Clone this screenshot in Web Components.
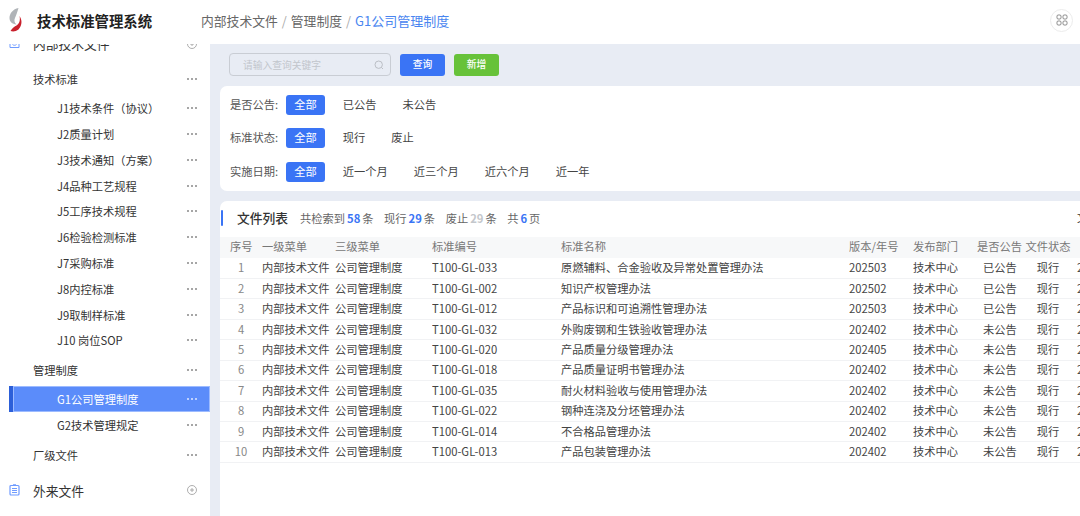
<!DOCTYPE html>
<html lang="zh">
<head>
<meta charset="utf-8">
<title>技术标准管理系统</title>
<style>
    html, body { margin: 0; height: 100%; overflow: hidden; }
    body { font-family: "Noto Sans CJK SC", "Noto Sans", sans-serif; color: #333; background: #fff; }
</style>
</head>
<body>
<app-shell>
    <app-header slot="header"></app-header>
    <side-nav slot="side"></side-nav>
    <search-bar slot="main"></search-bar>
    <filter-panel slot="main"></filter-panel>
    <file-table slot="main"></file-table>
</app-shell>

<script>
// ### Page frame ###
class AppShell extends HTMLElement {
    constructor() {
        super();
        this.attachShadow({ mode: 'open' });
        this.shadowRoot.innerHTML = `
            <style>
                :host { display: flex; flex-direction: column; width: 1080px; height: 516px; overflow: hidden; }
                .body { flex: 1; display: flex; min-height: 0; }
                .side { width: 210px; flex: none; overflow: hidden; }
                .main { flex: 1; min-width: 0; display: flex; flex-direction: column; background: #e8ecf4; padding-left: 10px; overflow: hidden; }
            </style>
            <slot name="header"></slot>
            <div class="body">
                <div class="side"><slot name="side"></slot></div>
                <div class="main"><slot name="main"></slot></div>
            </div>
        `;
    }
}

class AppHeader extends HTMLElement {
    constructor() {
        super();
        this.attachShadow({ mode: 'open' });
        this.shadowRoot.innerHTML = `
            <style>
                :host { display: flex; align-items: center; height: 44px; box-sizing: border-box; padding-bottom: 4px; flex: none; background: #fff; position: relative; z-index: 2; }
                .logo { width: 13px; height: 24px; margin-left: 9px; margin-right: 15px; flex: none; }
                h1 { margin: 0; width: 164px; font-size: 14.4px; font-weight: 700; color: #222; white-space: nowrap; }
                .crumbs { flex: 1; display: flex; gap: 4px; font-size: 12.8px; color: #666; white-space: nowrap; }
                .crumbs i { font-style: normal; color: #aaa; }
                .crumbs b { font-weight: 400; font-size: 13px; color: #4a86f0; }
                .apps { width: 23px; height: 23px; box-sizing: border-box; margin-right: 7px; border: 1px solid #ececec; border-radius: 50%; display: flex; align-items: center; justify-content: center; }
            </style>
            <svg class="logo" viewBox="0 0 13 24">
                <path d="M9.5 0 C4 1 0.5 5.5 0.5 10 C0.5 13.5 3 16 7.5 16.5 C5.2 14.5 5 12 6 10 C7.2 7 8.6 3.5 9.5 0Z" fill="#b0b4b8"/>
                <path d="M10.5 8 C13.5 12 13 18 9.5 21.5 C7 23.5 4 24 1.5 23 C3 20.5 5 18.5 7.5 17.5 C10.5 15.5 11.5 12 10.5 8Z" fill="#c8202c"/>
            </svg>
            <h1>技术标准管理系统</h1>
            <div class="crumbs"><span>内部技术文件</span><i>/</i><span>管理制度</span><i>/</i><b>G1公司管理制度</b></div>
            <div class="apps">
                <svg width="12" height="12" viewBox="0 0 12 12" fill="none" stroke="#888" stroke-width="1">
                    <rect x="1" y="1" width="4" height="4" rx="1.2"/><rect x="7" y="1" width="4" height="4" rx="1.2"/>
                    <rect x="1" y="7" width="4" height="4" rx="1.2"/><rect x="7" y="7" width="4" height="4" rx="1.2"/>
                </svg>
            </div>
        `;
    }
}

// One row of the side menu: level 0 = group with icon, 1 = section, 2 = leaf.
class NavItem extends HTMLElement {
    constructor() {
        super();
        this.attachShadow({ mode: 'open' });
        this.shadowRoot.innerHTML = `
            <style>
                :host { display: flex; align-items: center; height: 25.8px; padding-right: 13px; font-size: 11.25px; color: #333; white-space: nowrap; box-sizing: border-box; }
                :host([level="1"]) { padding-left: 33px; }
                :host([level="2"]) { padding-left: 57px; }
                :host([level="0"]) { padding-left: 33px; font-size: 12.75px; }
                :host([selected]) { background: #5b8cfa; color: #fff; margin-left: 9px; border-left: 4px solid #2c5fd8; padding-left: 44px; box-shadow: inset 0 0 0 1px #9dbbff; }
                .label { flex: 1; }
                .dots { width: 10px; height: 2px; display: flex; justify-content: space-between; }
                .dots span { width: 2px; height: 2px; border-radius: 50%; background: #888; }
                :host([selected]) .dots span { background: #dfe8ff; }
                .plus { display: none; width: 10px; height: 10px; }
                :host([level="0"]) .plus { display: block; }
                :host([level="0"]) .dots { display: none; }
                ::slotted(svg) { position: absolute; left: 9px; }
            </style>
            <slot name="icon"></slot>
            <span class="label"><slot></slot></span>
            <span class="dots"><span></span><span></span><span></span></span>
            <svg class="plus" viewBox="0 0 10 10" fill="none" stroke="#999" stroke-width=".8">
                <circle cx="5" cy="5" r="4.5"/><path d="M3 5h4M5 3v4"/>
            </svg>
        `;
    }
}

class SideNav extends HTMLElement {
    constructor() {
        super();
        this.attachShadow({ mode: 'open' });
        this.shadowRoot.innerHTML = `
            <style>
                :host { display: block; height: 100%; overflow: hidden; background: #fff; }
                /* The menu is scrolled: its first group is cut by the header. */
                .list { position: relative; margin-top: -13.2px; display: flex; flex-direction: column; }
                .sec { margin-top: 3.5px; }
                .first { margin-top: 9.5px; }
                .tail { margin-top: 4px; }
                .group { margin-top: 10px; }
            </style>
            <div class="list">
                <nav-item level="0">
                    <svg slot="icon" width="11" height="11" viewBox="0 0 11 11" fill="none" stroke="#6f9bff" stroke-width="1"><path d="M1 2.5h3l1 1h5v6H1z"/><path d="M3.5 6.5c1 1 3 1 4 0"/></svg>
                    内部技术文件
                </nav-item>
                <nav-item level="1" class="first">技术标准</nav-item>
                <nav-item level="2" class="sec">J1技术条件（协议）</nav-item>
                <nav-item level="2">J2质量计划</nav-item>
                <nav-item level="2">J3技术通知（方案）</nav-item>
                <nav-item level="2">J4品种工艺规程</nav-item>
                <nav-item level="2">J5工序技术规程</nav-item>
                <nav-item level="2">J6检验检测标准</nav-item>
                <nav-item level="2">J7采购标准</nav-item>
                <nav-item level="2">J8内控标准</nav-item>
                <nav-item level="2">J9取制样标准</nav-item>
                <nav-item level="2">J10 岗位SOP</nav-item>
                <nav-item level="1" class="sec">管理制度</nav-item>
                <nav-item level="2" class="sec" selected>G1公司管理制度</nav-item>
                <nav-item level="2">G2技术管理规定</nav-item>
                <nav-item level="1" class="tail">厂级文件</nav-item>
                <nav-item level="0" class="group">
                    <svg slot="icon" width="11" height="12" viewBox="0 0 11 12" fill="none" stroke="#6f9bff" stroke-width="1.2"><rect x="1" y="1.5" width="9" height="9.5" rx="1"/><path d="M3 4.5h5M3 6.5h5M3 8.5h5M4 .8h3"/></svg>
                    外来文件
                </nav-item>
            </div>
        `;
    }
}

class SearchBar extends HTMLElement {
    constructor() {
        super();
        this.attachShadow({ mode: 'open' });
        this.shadowRoot.innerHTML = `
            <style>
                :host { display: flex; align-items: center; height: 42px; flex: none; padding: 0 0 1px 9px; box-sizing: border-box; }
                .input { width: 162px; height: 23px; box-sizing: border-box; border: 1px solid #c9cdd4; border-radius: 4px; display: flex; align-items: center; padding: 0 6px 0 13px; font-size: 9.75px; color: #c2c6cc; margin-right: 9px; }
                .input span { flex: 1; }
                button { width: 45px; height: 22px; border: 0; border-radius: 3px; font: inherit; font-size: 9.75px; font-weight: 500; color: #fff; padding: 0 0 1px; background: #3a74f5; }
                button.add { background: #67c23a; margin-left: 9px; }
            </style>
            <div class="input">
                <span>请输入查询关键字</span>
                <svg width="10" height="10" viewBox="0 0 10 10" fill="none" stroke="#b5b9bf" stroke-width=".9"><circle cx="4.7" cy="4.7" r="3.7"/><path d="M7.5 7.5l1.5 1.5"/></svg>
            </div>
            <button>查询</button>
            <button class="add">新增</button>
        `;
    }
}

class FilterRow extends HTMLElement {
    constructor() {
        super();
        this.attachShadow({ mode: 'open' });
    }
    connectedCallback() {
        const opts = this.getAttribute('options').split(',');
        this.shadowRoot.innerHTML = `
            <style>
                :host { display: flex; align-items: center; height: 33.5px; font-size: 11.25px; color: #555; white-space: nowrap; }
                .label { width: 56px; flex: none; padding-bottom: 2px; }
                .opt { height: 20px; padding: 0 8.25px; margin-right: 9.5px; line-height: 18px; border-radius: 3px; color: #444; }
                .opt.on { background: #3a74f5; color: #fff; }
            </style>
            <span class="label">${this.getAttribute('label')}:</span>
            ${opts.map((o, i) => `<span class="opt${i === 0 ? ' on' : ''}">${o}</span>`).join('')}
        `;
    }
}

class FilterPanel extends HTMLElement {
    constructor() {
        super();
        this.attachShadow({ mode: 'open' });
        this.shadowRoot.innerHTML = `
            <style>
                :host { display: block; flex: none; height: 105px; box-sizing: border-box; background: #fff; border-radius: 7px 0 0 7px; padding: 2px 0 0 10px; margin-bottom: 10px; }
            </style>
            <filter-row label="是否公告" options="全部,已公告,未公告"></filter-row>
            <filter-row label="标准状态" options="全部,现行,废止"></filter-row>
            <filter-row label="实施日期" options="全部,近一个月,近三个月,近六个月,近一年"></filter-row>
        `;
    }
}

const ROWS = [
    ['T100-GL-033', '原燃辅料、合金验收及异常处置管理办法', '202503', '已公告'],
    ['T100-GL-002', '知识产权管理办法', '202502', '已公告'],
    ['T100-GL-012', '产品标识和可追溯性管理办法', '202503', '已公告'],
    ['T100-GL-032', '外购废钢和生铁验收管理办法', '202402', '未公告'],
    ['T100-GL-020', '产品质量分级管理办法', '202405', '未公告'],
    ['T100-GL-018', '产品质量证明书管理办法', '202402', '未公告'],
    ['T100-GL-035', '耐火材料验收与使用管理办法', '202402', '未公告'],
    ['T100-GL-022', '钢种连浇及分坯管理办法', '202402', '未公告'],
    ['T100-GL-014', '不合格品管理办法', '202402', '未公告'],
    ['T100-GL-013', '产品包装管理办法', '202402', '未公告'],
];

class FileTable extends HTMLElement {
    constructor() {
        super();
        this.attachShadow({ mode: 'open' });
        const rows = ROWS.map((r, i) => `
            <tr>
                <td class="c n">${i + 1}</td><td>内部技术文件</td><td>公司管理制度</td><td>${r[0]}</td>
                <td>${r[1]}</td><td>${r[2]}</td><td>技术中心</td><td class="c">${r[3]}</td><td class="c">现行</td><td class="d">2025-03-01</td>
            </tr>`).join('');
        this.shadowRoot.innerHTML = `
            <style>
                :host { display: block; flex: 1; background: #fff; border-radius: 7px 0 0 0; overflow: hidden; font-size: 11.25px; color: #444; }
                .head { position: relative; display: flex; align-items: center; height: 36px; box-sizing: border-box; padding: 0 0 3px 17px; white-space: nowrap; gap: 10.5px; color: #666; }
                .head::before { content: ""; position: absolute; left: 1px; top: 9px; width: 2px; height: 16px; background: #3a74f5; border-radius: 1px; }
                h2 { margin: 0 1.5px 0 0; font-size: 12.75px; font-weight: 500; color: #333; }
                .head b { color: #3a74f5; font-weight: 700; margin: 0 2px; }
                .head b.off { color: #c4c7cc; }
                .x { position: absolute; left: 857px; top: 8px; font-size: 11.25px; color: #333; }
                table { border-collapse: collapse; table-layout: fixed; width: 870px; white-space: nowrap; }
                th, td { padding: 0 0 2px; text-align: left; overflow: hidden; box-sizing: border-box; }
                th { height: 21px; padding-bottom: 3px; background: #f7f8f9; font-weight: 400; color: #777; }
                td { height: 20.45px; border-bottom: 1px solid #f1f2f4; }
                .c { text-align: center; }
                .n { color: #888; }
                .d { padding-left: 4px; }
                th:first-child { padding-left: 10px; }
            </style>
            <div class="head">
                <h2>文件列表</h2>
                <span>共检索到<b>58</b>条</span>
                <span>现行<b>29</b>条</span>
                <span>废止<b class="off">29</b>条</span>
                <span>共<b>6</b>页</span>
                <span class="x">文</span>
            </div>
            <table>
                <colgroup>
                    <col style="width:42px"><col style="width:73px"><col style="width:97px"><col style="width:129px">
                    <col style="width:288px"><col style="width:64px"><col style="width:64px"><col style="width:46px">
                    <col style="width:50px"><col style="width:17px">
                </colgroup>
                <thead><tr>
                    <th>序号</th><th>一级菜单</th><th>三级菜单</th><th>标准编号</th><th>标准名称</th>
                    <th>版本/年号</th><th>发布部门</th><th>是否公告</th><th class="c">文件状态</th><th></th>
                </tr></thead>
                <tbody>${rows}</tbody>
            </table>
        `;
    }
}

customElements.define('app-shell', AppShell);
customElements.define('app-header', AppHeader);
customElements.define('nav-item', NavItem);
customElements.define('side-nav', SideNav);
customElements.define('search-bar', SearchBar);
customElements.define('filter-row', FilterRow);
customElements.define('filter-panel', FilterPanel);
customElements.define('file-table', FileTable);
</script>
</body>
</html>
